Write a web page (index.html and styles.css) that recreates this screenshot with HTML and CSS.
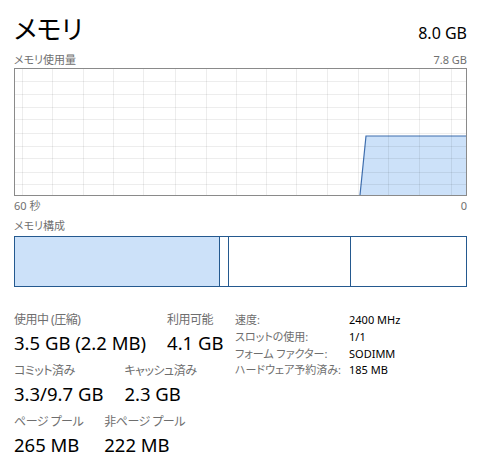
FILE: index.html
```html
<!DOCTYPE html>
<html lang="ja">
<head>
<meta charset="utf-8">
<link rel="stylesheet" href="styles.css">
</head>
<body>
<div class="page">
  <div class="header">
    <div class="title">メモリ</div>
    <div class="total">8.0 GB</div>
  </div>
  <div class="subrow">
    <span>メモリ使用量</span>
    <span>7.8 GB</span>
  </div>
  <div class="chart">
    <svg width="451" height="126" viewBox="0 0 451 126">
      <polygon points="345,126 351,67 451,67 451,126" fill="#cce1f9"/>
      <polyline points="345,126 351,67 451,67" fill="none" stroke="#3e6eae" stroke-width="1.2"/>
      <g stroke="rgba(0,0,0,0.07)" stroke-width="1">
        <line x1="7.5" y1="0" x2="7.5" y2="126"/>
        <line x1="37.5" y1="0" x2="37.5" y2="126"/>
        <line x1="68.5" y1="0" x2="68.5" y2="126"/>
        <line x1="98.5" y1="0" x2="98.5" y2="126"/>
        <line x1="128.5" y1="0" x2="128.5" y2="126"/>
        <line x1="160.5" y1="0" x2="160.5" y2="126"/>
        <line x1="191.5" y1="0" x2="191.5" y2="126"/>
        <line x1="221.5" y1="0" x2="221.5" y2="126"/>
        <line x1="251.5" y1="0" x2="251.5" y2="126"/>
        <line x1="281.5" y1="0" x2="281.5" y2="126"/>
        <line x1="312.5" y1="0" x2="312.5" y2="126"/>
        <line x1="343.5" y1="0" x2="343.5" y2="126"/>
        <line x1="373.5" y1="0" x2="373.5" y2="126"/>
        <line x1="404.5" y1="0" x2="404.5" y2="126"/>
        <line x1="436.5" y1="0" x2="436.5" y2="126"/>
        <line x1="0" y1="12.5" x2="451" y2="12.5"/>
        <line x1="0" y1="25.5" x2="451" y2="25.5"/>
        <line x1="0" y1="38.5" x2="451" y2="38.5"/>
        <line x1="0" y1="50.5" x2="451" y2="50.5"/>
        <line x1="0" y1="64.5" x2="451" y2="64.5"/>
        <line x1="0" y1="77.5" x2="451" y2="77.5"/>
        <line x1="0" y1="89.5" x2="451" y2="89.5"/>
        <line x1="0" y1="103.5" x2="451" y2="103.5"/>
        <line x1="0" y1="115.5" x2="451" y2="115.5"/>
      </g>
    </svg>
  </div>
  <div class="subrow axis">
    <span>60 秒</span>
    <span>0</span>
  </div>
  <div class="subrow comp-label">
    <span>メモリ構成</span>
  </div>
  <div class="compbar">
    <div class="seg inuse" style="width:205px"></div>
    <div class="seg" style="width:9px"></div>
    <div class="seg" style="width:122px"></div>
    <div class="seg last"></div>
  </div>
  <div class="stats">
    <div class="left">
      <div class="pairs">
        <div class="pair"><div class="label">使用中 (圧縮)</div><div class="value">3.5 GB (2.2 MB)</div></div>
        <div class="pair"><div class="label">利用可能</div><div class="value">4.1 GB</div></div>
      </div>
      <div class="pairs">
        <div class="pair"><div class="label">コミット済み</div><div class="value">3.3/9.7 GB</div></div>
        <div class="pair"><div class="label">キャッシュ済み</div><div class="value">2.3 GB</div></div>
      </div>
      <div class="pairs">
        <div class="pair"><div class="label">ページ プール</div><div class="value">265 MB</div></div>
        <div class="pair"><div class="label">非ページ プール</div><div class="value">222 MB</div></div>
      </div>
    </div>
    <div class="table">
      <div class="tl">速度:</div><div class="tv">2400 MHz</div>
      <div class="tl">スロットの使用:</div><div class="tv">1/1</div>
      <div class="tl">フォーム ファクター:</div><div class="tv">SODIMM</div>
      <div class="tl">ハードウェア予約済み:</div><div class="tv">185 MB</div>
    </div>
  </div>
</div>
</body>
</html>
```
FILE: styles.css
```css
html, body {
  margin: 0;
  padding: 0;
  background: #ffffff;
}
body {
  font-family: "Noto Sans", "Noto Sans CJK JP", sans-serif;
  font-feature-settings: "palt";
  color: #000;
}
.page {
  width: 453px;
  padding: 13px 0 0 14px;
}
.header {
  display: flex;
  justify-content: space-between;
  align-items: baseline;
  height: 30px;
}
.title {
  font-size: 26px;
  line-height: 30px;
  font-family: "Noto Sans CJK JP", sans-serif;
}
.total {
  font-size: 16px;
  line-height: 30px;
}
.subrow {
  display: flex;
  justify-content: space-between;
  font-size: 11px;
  line-height: 14px;
  color: #707070;
  margin-top: 10px;
  margin-bottom: 1px;
}
.chart {
  width: 451px;
  height: 126px;
  border: 1px solid #8a8a8a;
}
.chart svg {
  display: block;
}
.axis {
  margin-top: 3px;
  margin-bottom: 0;
}
.comp-label {
  margin-top: 6px;
  margin-bottom: 0;
}
.compbar {
  margin-top: 3px;
  width: 451px;
  height: 49px;
  border: 1px solid #24598f;
  display: flex;
}
.seg {
  height: 100%;
  border-right: 1px solid #24598f;
  box-sizing: border-box;
  flex: none;
}
.seg.inuse {
  background: #cce1f9;
}
.seg.last {
  flex: 1;
  border-right: none;
}
.stats {
  display: flex;
  align-items: flex-start;
  margin-top: 25px;
}
.left {
  display: flex;
  flex-direction: column;
  gap: 9px;
  width: 221px;
  flex: none;
}
.pairs {
  display: flex;
  gap: 21px;
}
.pair {
  display: flex;
  flex-direction: column;
  gap: 4px;
}
.label {
  font-size: 12px;
  line-height: 16px;
  letter-spacing: -0.5px;
  color: #6e6e6e;
  white-space: nowrap;
}
.value {
  font-size: 18.5px;
  line-height: 22px;
  white-space: nowrap;
}
.table {
  display: grid;
  grid-template-columns: 114px auto;
  align-content: start;
  font-size: 11px;
  line-height: 16.8px;
  white-space: nowrap;
}
.tl {
  color: #6e6e6e;
}
.tv {
  color: #000;
}
```
